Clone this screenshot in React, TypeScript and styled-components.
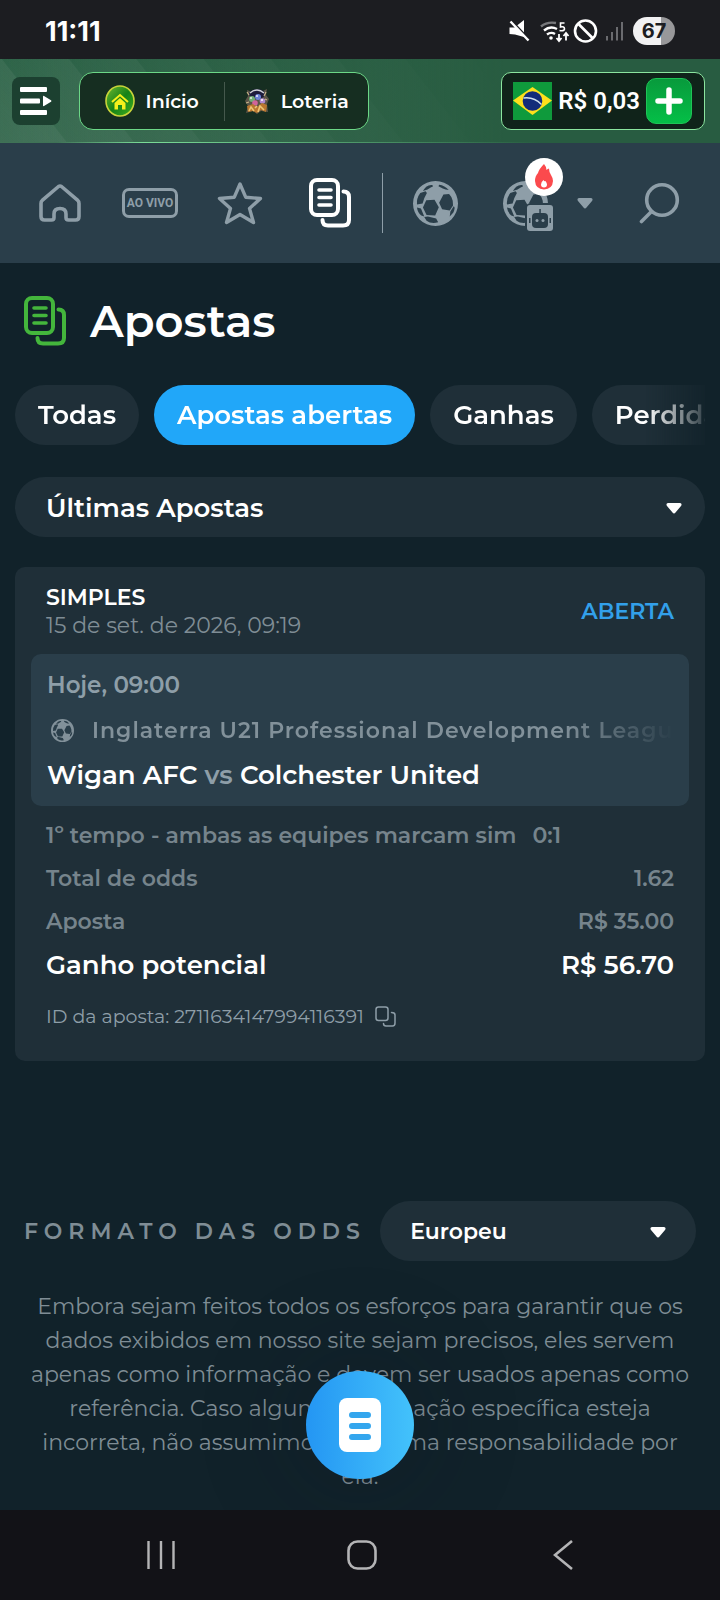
import React from "react";
import styled, { createGlobalStyle, css } from "styled-components";

const c = {
  page: "#11222a",
  panel: "#1f2f38",
  bar: "#2a3e4a",
  muted: "#7f8d95",
  soft: "#8e9ea8",
  blue: "#21a7f9",
};

const GlobalStyle = createGlobalStyle`
  * { box-sizing: border-box; }
  body {
    margin: 0;
    background: ${c.page};
    color: #fff;
    font-family: Montserrat, Inter, "Open Sans", sans-serif;
    -webkit-font-smoothing: antialiased;
  }
  button, select { font: inherit; color: inherit; border: 0; background: none; padding: 0; margin: 0; }
  button { cursor: pointer; }
  a { color: inherit; text-decoration: none; }
  h1, p, dl, dd, dt { margin: 0; }
  svg { display: block; flex: none; }
`;

const Page = styled.div`
  min-height: 100vh;
  display: flex;
  flex-direction: column;
`;

/* ---------- phone status bar ---------- */

const StatusBar = styled.div`
  height: 59px;
  padding: 3px 45px 0;
  background: #1c1d21;
  display: flex;
  align-items: center;
  justify-content: space-between;
`;

const Clock = styled.span`
  font-family: Inter, sans-serif;
  font-size: 27px;
  font-weight: 700;
`;

const StatusIcons = styled.div`
  display: flex;
  align-items: center;
`;

const Battery = styled.span`
  margin-left: 10px;
  width: 42px;
  height: 28px;
  border-radius: 14px;
  background: linear-gradient(90deg, #f1f1f2 67%, #98989a 67%);
  color: #1c1d21;
  font-family: Inter, sans-serif;
  font-size: 20px;
  line-height: 28px;
  font-weight: 700;
  text-align: center;
`;

/* ---------- green header ---------- */

const Header = styled.header`
  height: 84px;
  padding: 1px 15px 0 12px;
  display: flex;
  align-items: center;
  border-bottom: 1px solid;
  border-image: linear-gradient(90deg, #3f7256 8%, #7bdc98 20%, #4d9568 50%, #285c41 75%) 1;
  background:
    linear-gradient(90deg, rgba(40, 92, 65, 0), #285c41 70%),
    repeating-linear-gradient(52deg, rgba(255, 255, 255, 0.02) 0 1px, rgba(255, 255, 255, 0.07) 52px, rgba(255, 255, 255, 0.02) 53px),
    linear-gradient(#2a6145, #3a6c52);
`;

const MenuButton = styled.button`
  width: 48px;
  height: 48px;
  border-radius: 8px;
  background: #1c4030;
  display: grid;
  place-items: center;
`;

const Switcher = styled.nav`
  margin-left: 19px;
  height: 58px;
  width: 290px;
  border: 1px solid #6cd887;
  border-radius: 14px;
  background: #162e21;
  display: flex;
  align-items: center;
`;

const SwitchLink = styled.a`
  flex: 1;
  height: 39px;
  display: flex;
  align-items: center;
  justify-content: center;
  gap: 11px;
  font-size: 19px;
  font-weight: 600;
  & + & { border-left: 1px solid #45594d; }
`;

const Wallet = styled.div`
  margin-left: auto;
  height: 58px;
  padding: 0 12px 0 11px;
  border: 1px solid #8be59f;
  border-radius: 10px;
  background: #10231a;
  display: flex;
  align-items: center;
  gap: 6px;
`;

const Amount = styled.span`
  font-family: Roboto, sans-serif;
  font-size: 24px;
  font-weight: 600;
  line-height: 28px;
`;

const AddButton = styled.button`
  width: 46px;
  height: 46px;
  border-radius: 10px;
  border: 1px solid #1fc457;
  background: linear-gradient(#089a3c, #04bf47);
  display: grid;
  place-items: center;
`;

/* ---------- sport navigation ---------- */

const SportNav = styled.nav`
  height: 120px;
  padding: 0 15px;
  background: ${c.bar};
  display: grid;
  grid-template-columns: repeat(4, 6fr) 1fr 6fr 9fr 6fr;
  align-items: center;
  justify-items: center;
`;

const NavItem = styled.a<{ $active?: boolean }>`
  display: flex;
  align-items: center;
  gap: 24px;
  color: ${(p) => (p.$active ? "#fff" : c.soft)};
`;

const LiveTag = styled.span`
  width: 56px;
  height: 30px;
  border: 3px solid;
  border-radius: 7px;
  font-family: Roboto, sans-serif;
  font-size: 12px;
  line-height: 24px;
  font-weight: 700;
  display: flex;
  justify-content: center;
  white-space: nowrap;
`;

const Divider = styled.span`
  width: 1px;
  height: 60px;
  background: ${c.soft};
`;

const BallStack = styled.span`
  position: relative;
  display: block;
  width: 50px;
`;

const FireBadge = styled.span`
  position: absolute;
  top: -23px;
  left: 22px;
  width: 38px;
  height: 38px;
  border-radius: 50%;
  background: #fff;
  display: grid;
  place-items: center;
`;

const RobotBadge = styled.span`
  position: absolute;
  top: 22px;
  left: 22px;
  border: 2px solid ${c.bar};
  border-radius: 6px;
  background: ${c.bar};
`;

/* ---------- content ---------- */

const Main = styled.main`
  flex: 1;
  padding: 0 15px 16px;
`;

const TitleRow = styled.div`
  height: 122px;
  padding: 0 9px 6px;
  display: flex;
  align-items: center;
  gap: 24px;
  color: #44b63c;
`;

const Title = styled.h1`
  color: #fff;
  font-size: 45px;
  line-height: 56px;
  font-weight: 600;
`;

const Chips = styled.div`
  display: flex;
  gap: 15px;
  overflow: hidden;
  mask-image: linear-gradient(90deg, #000 calc(100% - 60px), rgba(0, 0, 0, 0.15));
`;

const Chip = styled.button<{ $active?: boolean }>`
  flex: none;
  height: 60px;
  padding: 0 23px;
  border-radius: 30px;
  background: ${(p) => (p.$active ? c.blue : c.panel)};
  font-size: 26px;
  font-weight: 600;
`;

const SelectBox = styled.div<{ $small?: boolean }>`
  position: relative;
  ${(p) => (p.$small ? css`width: 47%;` : css`margin: 32px 0 30px;`)}
  select {
    appearance: none;
    display: block;
    width: 100%;
    height: 60px;
    padding: 1px 60px 0 ${(p) => (p.$small ? 30 : 31)}px;
    border-radius: 30px;
    background: ${c.panel};
    font-size: ${(p) => (p.$small ? 22 : 26)}px;
    font-weight: 600;
  }
  svg {
    position: absolute;
    right: ${(p) => (p.$small ? 30 : 23)}px;
    top: 26px;
    pointer-events: none;
  }
`;

const Card = styled.article`
  border-radius: 10px;
  background: ${c.panel};
  padding: 17px 16px 25px;
`;

const CardHead = styled.div`
  padding: 0 15px 14px;
  display: flex;
  align-items: center;
  justify-content: space-between;
  font-size: 22px;
  line-height: 28px;
`;

const Kind = styled.div`
  font-weight: 600;
`;

const When = styled.div`
  color: ${c.muted};
`;

const State = styled.span`
  color: #32a0ea;
  font-weight: 600;
`;

const EventBox = styled.section`
  padding: 9px 16px 8px;
  border-radius: 10px;
  background: ${c.bar};
  font-size: 22px;
  line-height: 45px;
  font-weight: 600;
  color: ${c.soft};
`;

const Kickoff = styled.div`
  font-size: 23px;
`;

const League = styled.div`
  display: flex;
  align-items: center;
  gap: 18px;
  padding-left: 4px;
  overflow: hidden;
  white-space: nowrap;
  letter-spacing: 1px;
  color: #82919a;
  mask-image: linear-gradient(90deg, #000 calc(100% - 110px), transparent);
`;

const Teams = styled.div`
  font-size: 26px;
  strong { font-weight: 600; color: #fff; }
`;

const Rows = styled.dl`
  padding: 8px 15px 0;
`;

const Row = styled.div<{ $strong?: boolean; $start?: boolean }>`
  display: flex;
  justify-content: ${(p) => (p.$start ? "flex-start" : "space-between")};
  gap: 16px;
  font-weight: 600;
  font-size: ${(p) => (p.$strong ? 26 : 22)}px;
  line-height: ${(p) => (p.$strong ? 45 : 43)}px;
  color: ${(p) => (p.$strong ? "#fff" : "#76848c")};
`;

const BetId = styled.div`
  margin: 8px 15px 0;
  height: 40px;
  display: flex;
  align-items: center;
  gap: 11px;
  font-size: 19px;
  color: ${c.soft};
`;

const OddsFormat = styled.div`
  margin-top: 140px;
  padding: 0 9px;
  display: flex;
  align-items: center;
  justify-content: space-between;
  label {
    font-size: 22px;
    font-weight: 600;
    letter-spacing: 6px;
    white-space: nowrap;
    color: ${c.muted};
  }
`;

const Disclaimer = styled.p`
  margin-top: 29px;
  text-align: center;
  font-size: 22px;
  line-height: 34px;
  color: ${c.muted};
`;

const SlipButton = styled.button`
  position: fixed;
  bottom: 121px;
  left: calc(50% - 54px);
  width: 108px;
  height: 108px;
  border-radius: 50%;
  background: linear-gradient(90deg, #2496f3, #43c2fb);
  box-shadow: 0 0 90px 30px rgba(16, 24, 32, 0.14);
  display: grid;
  place-items: center;
`;

const SystemNav = styled.nav`
  position: relative;
  z-index: 1;
  height: 90px;
  padding: 0 56px 0 60px;
  background: #121217;
  display: grid;
  grid-template-columns: repeat(3, 1fr);
  align-items: center;
  button { display: grid; place-items: center; }
`;

/* ---------- icons ---------- */

const BALL =
  "M68 0A68 68 0 1 0 68 136A68 68 0 1 0 68 0ZM40 17Q48 11 58 12L61 16Q52 20 44 26L30 30Q34 23 40 17ZM79 11Q96 13 108 27Q98 27 90 23L77 16ZM22 36L38 31L42 36L34 52L29 68L12 71Q10 52 22 36ZM40 58L65 57L78 79L67 104L41 103L30 80ZM92 41L109 39Q116 45 120 60L121 74L111 89L88 85L79 66ZM123 76Q129 79 122 95L111 107L113 92ZM12 80L24 83L34 107L25 104Q14 96 12 80ZM34 109L45 107L70 113L76 125Q54 130 41 120Z";

const Ball = ({ size }: { size: number }) => (
  <svg width={size} height={size} viewBox="0 0 136 136" fill="currentColor" fillRule="evenodd">
    <path d={BALL} />
  </svg>
);

const Slips = () => (
  <svg width="42" height="50" viewBox="0 0 42 50" fill="none" stroke="currentColor" strokeWidth="4" strokeLinecap="round">
    <rect x="2" y="2" width="27" height="35" rx="6" />
    <path d="M10 12H22M10 19.5H22M10 27H22" strokeWidth="3.6" />
    <path d="M34.500 13.500Q40 13.500 40 19V42Q40 47.500 34 47.500H19Q13.500 47.500 13.500 42" />
  </svg>
);

const Caret = () => (
  <svg width="16" height="11" viewBox="0 0 16 11" fill="currentColor">
    <path d="M2 0H14Q16.500 0.500 15 3L9.500 9.500Q8 11.500 6.500 9.500L1 3Q-0.500 0.500 2 0Z" />
  </svg>
);

const HomeIcon = () => (
  <svg width="42" height="38" viewBox="0 0 42 38" fill="none" stroke="currentColor" strokeWidth="3.600" strokeLinejoin="round">
    <path d="M19.500 2.500Q21 1.500 22.500 2.500L38.500 16.200Q40 17.500 40 19.500V32.500Q40 36 36.500 36H29.500Q27 36 27 33.500V30Q27 24.500 21 24.500Q15 24.500 15 30V33.500Q15 36 12.500 36H5.500Q2 36 2 32.500V19.500Q2 17.500 3.500 16.200Z" />
  </svg>
);

const StarIcon = () => (
  <svg width="46" height="44" viewBox="0 0 46 44" fill="none" stroke="currentColor" strokeWidth="3.400" strokeLinejoin="round">
    <path d="M23 3L28.700 16.200L43.500 17.500L32.500 27.400L36.500 41.500L23 33.500L9.500 41.500L13.500 27.400L2.500 17.500L17.300 16.200Z" />
  </svg>
);

const SearchIcon = () => (
  <svg width="42" height="42" viewBox="0 0 42 42" fill="none" stroke="currentColor" strokeWidth="3.600" strokeLinecap="round">
    <circle cx="23" cy="18" r="15.300" />
    <path d="M12.500 29.500L2.500 39.500" />
  </svg>
);

const Flame = () => (
  <svg width="18" height="26" viewBox="0 0 18 26">
    <path d="M9 0Q11 2 11.500 6Q12 5 14 4.500Q14 8 16 11Q18 14 18 17Q17.500 25 9 25.500Q0.500 25 0 17Q0 12 3 9Q4 5 9 0Z" fill="#fb4a4d" />
    <path d="M8.500 16Q9.500 18 10.500 17Q12 19 12 20.500Q12 23.500 9 23.500Q6 23.500 6 20.500Q6 18 8.500 16Z" fill="#fff" />
  </svg>
);

const Robot = () => (
  <svg width="26" height="26" viewBox="0 0 26 26">
    <rect width="26" height="26" rx="3" fill={c.soft} />
    <g fill={c.bar}>
      <rect x="5" y="8" width="16" height="15" rx="4" />
      <rect x="12.300" y="4" width="1.500" height="5" />
      <rect x="2" y="13" width="1.500" height="5" />
      <rect x="22.500" y="13" width="1.500" height="5" />
    </g>
    <circle cx="10" cy="15.500" r="1.500" fill={c.soft} />
    <circle cx="16" cy="15.500" r="1.500" fill={c.soft} />
  </svg>
);

const MenuIcon = () => (
  <svg width="32" height="28" viewBox="0 0 32 28" fill="#fff">
    <rect width="27" height="5" rx="1" />
    <rect y="11.500" width="20" height="5" rx="1" />
    <rect y="23" width="27" height="5" rx="1" />
    <path d="M23 9.500Q23 8.500 24 9L31 13.200Q32 14 31 14.800L24 19Q23 19.500 23 18.500Z" />
  </svg>
);

const HomeCoin = () => (
  <svg width="30" height="32" viewBox="0 0 30 32">
    <defs>
      <linearGradient id="coin" x1="0" y1="0" x2="1" y2="1">
        <stop offset="0" stopColor="#6fb930" />
        <stop offset="0.500" stopColor="#178217" />
        <stop offset="1" stopColor="#3fb021" />
      </linearGradient>
    </defs>
    <ellipse cx="15" cy="16" rx="14" ry="15" fill="url(#coin)" stroke="#c8d43a" strokeWidth="1.600" />
    <path d="M7 17L15 10L23 17" fill="none" stroke="#f4f01c" strokeWidth="2" />
    <path d="M9.500 18L15 13L20.500 18V24.500H17V20H13V24.500H9.500Z" fill="#f4f01c" />
  </svg>
);

const LotteryIcon = () => (
  <svg width="26" height="28" viewBox="0 0 26 28">
    <path d="M3 3L8 5L13 2L19 4L23 2L22 8L25 12L23 17L24 25L17 24L13 27L9 24L2 26L4 19L1 14L4 9Z" fill="#5b5548" />
    <ellipse cx="13" cy="7" rx="8" ry="5" fill="#1d1c3c" />
    <path d="M6 6Q13 0 20 6" fill="none" stroke="#cfd3d8" strokeWidth="1.500" />
    <circle cx="8" cy="12" r="3" fill="#6fae78" />
    <circle cx="14" cy="10" r="3" fill="#6b83d6" />
    <circle cx="18.500" cy="14" r="2.800" fill="#b08ad0" />
    <circle cx="11" cy="16" r="2.800" fill="#d2649a" />
    <path d="M3 19L9 17L13 20L18 16L23 18L22 25L17 23L13 26L9 24L4 25Z" fill="#b9772f" />
    <path d="M5 24L7 20L10 24M14 25L16 19L20 23M11 21L13 19" stroke="#eec676" strokeWidth="1.600" fill="none" />
    <path d="M3 5L5 8M22 5L20 9M2 16L5 15M23 13L21 12" stroke="#c9b58a" strokeWidth="1.200" />
    <circle cx="7" cy="11" r="1" fill="#e8f2e8" />
    <circle cx="13" cy="9" r="1" fill="#eef" />
    <circle cx="18" cy="13" r="1" fill="#fff" />
  </svg>
);

const Flag = () => (
  <svg width="39" height="38" viewBox="0 0 39 38" role="img" aria-label="Brasil">
    <rect width="39" height="38" fill="#0f9a3c" />
    <path d="M0 18.500L19.500 5L39 18.500L19.500 33Z" fill="#fde01c" />
    <circle cx="19.500" cy="19" r="9.800" fill="#132c7a" />
    <path d="M10.500 16Q21 14.500 28.500 22.500" fill="none" stroke="#cfe0ee" strokeWidth="1.300" />
  </svg>
);

const PlusIcon = () => (
  <svg width="28" height="28" viewBox="0 0 28 28" stroke="#fff" strokeWidth="5.500" strokeLinecap="round">
    <path d="M14 3V25M3 14H25" />
  </svg>
);

const CopyIcon = () => (
  <svg width="21" height="21" viewBox="0 0 21 21" fill="none" stroke="currentColor" strokeWidth="1.500" strokeLinecap="round">
    <rect x="1" y="1" width="12" height="13.500" rx="2.500" />
    <path d="M16.500 6.500Q20 6.500 20 9V17Q20 20 17.500 20H11Q8.500 20 8.500 17.500" />
  </svg>
);

const SlipIcon = () => (
  <svg width="42" height="54" viewBox="0 0 42 54">
    <rect width="42" height="54" rx="8" fill="#fff" />
    <path d="M13 17H29M13 28H29M13 39H29" stroke="#34a6ee" strokeWidth="6" strokeLinecap="round" />
  </svg>
);

const StatusGlyphs = () => (
  <svg width="114" height="28" viewBox="0 0 114 28" fill="none" stroke="#fff" strokeWidth="2.400">
    <path d="M0.500 10.500H5.500L15 3V20L6 17.500L0.500 17Z" fill="#fff" stroke="none" />
    <path d="M0 1L20 22.500" stroke="#1c1d21" strokeWidth="2.400" />
    <path d="M1.500 4.500L19.500 23.500" />
    <path d="M32 9.500Q38 4.500 47 6" stroke="#77787b" />
    <path d="M35 13.500Q41 8.500 48 12M38 17.500Q42 14.500 46 17" />
    <circle cx="42" cy="21" r="1.800" fill="#fff" stroke="none" />
    <path d="M55.500 6H51.500V10Q55.500 9 55.500 12Q55 14.500 50.500 13.500" strokeWidth="1.600" />
    <path d="M50 17V23.500M47.500 21L50 24L52.500 21M57 23.500V16.500M54.500 19L57 16L59.500 19" strokeWidth="1.800" />
    <circle cx="76.500" cy="14" r="10.500" strokeWidth="2.600" />
    <path d="M69.500 7L83.500 21" strokeWidth="2.600" />
    <g stroke="#6a6b6f" strokeWidth="2">
      <path d="M98 19V23.500M103 15V23.500M108 10V23.500" />
      <path d="M113 5V23.500" />
    </g>
  </svg>
);

/* ---------- page ---------- */

export default function App() {
  return (
    <Page>
      <GlobalStyle />
      <StatusBar>
        <Clock>11:11</Clock>
        <StatusIcons>
          <StatusGlyphs />
          <Battery>67</Battery>
        </StatusIcons>
      </StatusBar>

      <Header>
        <MenuButton aria-label="Menu"><MenuIcon /></MenuButton>
        <Switcher>
          <SwitchLink href="#inicio"><HomeCoin />Início</SwitchLink>
          <SwitchLink href="#loteria"><LotteryIcon />Loteria</SwitchLink>
        </Switcher>
        <Wallet>
          <Flag />
          <Amount>R$ 0,03</Amount>
          <AddButton aria-label="Depositar"><PlusIcon /></AddButton>
        </Wallet>
      </Header>

      <SportNav>
        <NavItem href="#home" aria-label="Home"><HomeIcon /></NavItem>
        <NavItem href="#ao-vivo"><LiveTag>AO VIVO</LiveTag></NavItem>
        <NavItem href="#favoritos" aria-label="Favoritos"><StarIcon /></NavItem>
        <NavItem href="#apostas" aria-label="Apostas" $active><Slips /></NavItem>
        <Divider />
        <NavItem href="#futebol" aria-label="Futebol"><Ball size={45} /></NavItem>
        <NavItem href="#virtual" aria-label="Futebol virtual">
          <BallStack>
            <Ball size={45} />
            <FireBadge><Flame /></FireBadge>
            <RobotBadge><Robot /></RobotBadge>
          </BallStack>
          <Caret />
        </NavItem>
        <NavItem href="#busca" aria-label="Buscar"><SearchIcon /></NavItem>
      </SportNav>

      <Main>
        <TitleRow>
          <Slips />
          <Title>Apostas</Title>
        </TitleRow>

        <Chips>
          <Chip>Todas</Chip>
          <Chip $active>Apostas abertas</Chip>
          <Chip>Ganhas</Chip>
          <Chip>Perdidas</Chip>
        </Chips>

        <SelectBox>
          <select aria-label="Ordenar apostas"><option>Últimas Apostas</option></select>
          <Caret />
        </SelectBox>

        <Card>
          <CardHead>
            <div>
              <Kind>SIMPLES</Kind>
              <When>15 de set. de 2026, 09:19</When>
            </div>
            <State>ABERTA</State>
          </CardHead>
          <EventBox>
            <Kickoff>Hoje, 09:00</Kickoff>
            <League><Ball size={23} />Inglaterra U21 Professional Development League</League>
            <Teams><strong>Wigan AFC</strong> vs <strong>Colchester United</strong></Teams>
          </EventBox>
          <Rows>
            <Row $start><dt>1º tempo - ambas as equipes marcam sim</dt><dd>0:1</dd></Row>
            <Row><dt>Total de odds</dt><dd>1.62</dd></Row>
            <Row><dt>Aposta</dt><dd>R$ 35.00</dd></Row>
            <Row $strong><dt>Ganho potencial</dt><dd>R$ 56.70</dd></Row>
          </Rows>
          <BetId>
            <span>ID da aposta: 2711634147994116391</span>
            <button aria-label="Copiar ID"><CopyIcon /></button>
          </BetId>
        </Card>

        <OddsFormat>
          <label htmlFor="odds">FORMATO DAS ODDS</label>
          <SelectBox $small>
            <select id="odds"><option>Europeu</option></select>
            <Caret />
          </SelectBox>
        </OddsFormat>

        <Disclaimer>
          Embora sejam feitos todos os esforços para garantir que os<br />
          dados exibidos em nosso site sejam precisos, eles servem<br />
          apenas como informação e devem ser usados apenas como<br />
          referência. Caso alguma informação específica esteja<br />
          incorreta, não assumimos nenhuma responsabilidade por<br />
          ela.
        </Disclaimer>
      </Main>

      <SlipButton aria-label="Cupom de apostas"><SlipIcon /></SlipButton>

      <SystemNav>
        <button aria-label="Recentes">
          <svg width="28" height="30" viewBox="0 0 28 30" stroke="#b4b4b6" strokeWidth="2.400"><path d="M1.500 1V29M14 1V29M26.500 1V29" /></svg>
        </button>
        <button aria-label="Início do sistema">
          <svg width="30" height="30" viewBox="0 0 30 30" fill="none" stroke="#b4b4b6" strokeWidth="2.600"><rect x="1.500" y="1.500" width="27" height="27" rx="9" /></svg>
        </button>
        <button aria-label="Voltar">
          <svg width="20" height="30" viewBox="0 0 20 30" fill="none" stroke="#b4b4b6" strokeWidth="2.600"><path d="M19 1L2 15L19 29" /></svg>
        </button>
      </SystemNav>
    </Page>
  );
}
